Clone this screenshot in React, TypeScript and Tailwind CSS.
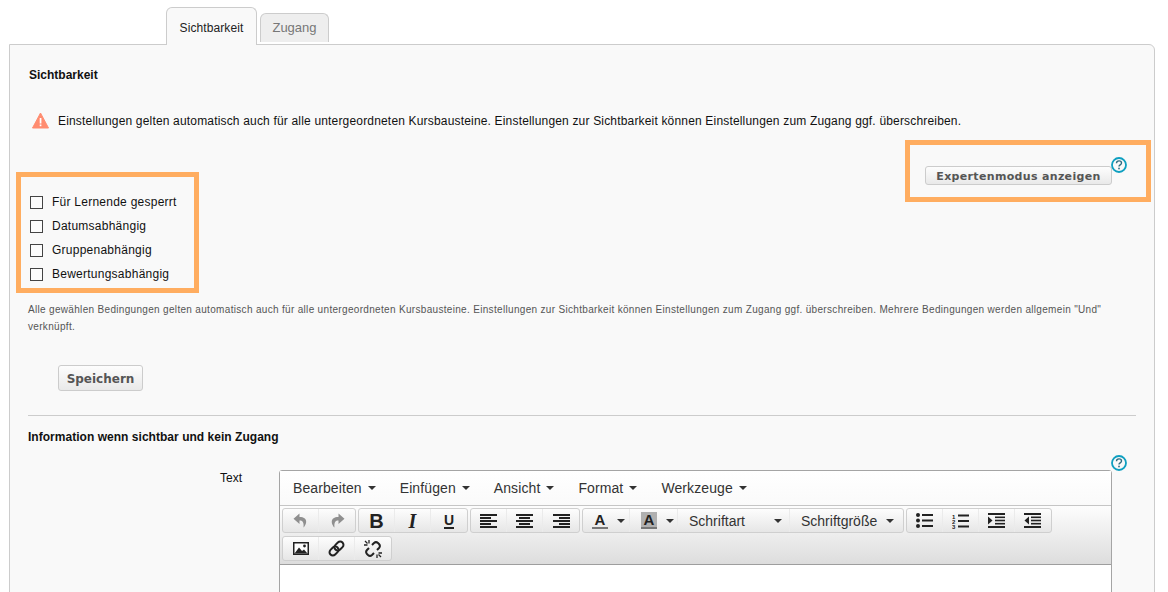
import type { ReactNode } from "react";

function Help() {
  return (
    <svg width="16" height="16" viewBox="0 0 16 16" className="block">
      <circle cx="8" cy="8" r="7" fill="none" stroke="#0e9fc0" strokeWidth="1.8" />
      <path d="M5.5 6.200c0-1.400 1.100-2.300 2.500-2.300s2.500.8 2.500 2.100c0 1.900-2.500 1.900-2.500 3.600" fill="none" stroke="#2f6d80" strokeWidth="1.400" />
      <rect x="7.200" y="10.700" width="1.600" height="1.600" fill="#2f6d80" />
    </svg>
  );
}

function Caret() {
  return <span className="inline-block w-0 h-0 border-x-[4px] border-x-transparent border-t-[4px] border-t-[#333]" />;
}

function Check({ label }: { label: string }) {
  return (
    <label className="flex items-center h-[24px] gap-[9px]">
      <span className="w-[13px] h-[13px] border border-[#444] bg-[#fcfcfc]" />
      <span className="text-[12px] tracking-[0.25px] text-[#111]">{label}</span>
    </label>
  );
}

function Lines({ rows }: { rows: [number, number][] }) {
  return (
    <svg width="18" height="14" viewBox="0 0 18 14">
      {rows.map(([x, w], i) => (
        <rect key={i} x={x} y={i * (12 / (rows.length - 1))} width={w} height="2" fill="#222" />
      ))}
    </svg>
  );
}

function Btn({ children, className = "w-[36px] justify-center" }: { children: ReactNode; className?: string }) {
  return (
    <div className={`${className} h-full flex items-center border-r border-[#ebebeb] last:border-r-0 text-[#333]`}>
      {children}
    </div>
  );
}

function Group({ children }: { children: ReactNode }) {
  return (
    <div className="flex h-[25px] border border-[#cfcfcf] rounded-[3px] bg-gradient-to-b from-[#fdfdfd] to-[#e6e6e6]">
      {children}
    </div>
  );
}

const menus = ["Bearbeiten", "Einfügen", "Ansicht", "Format", "Werkzeuge"];

export default function App() {
  return (
    <div className="w-[1168px] h-[592px] overflow-hidden bg-white font-['Liberation_Sans',sans-serif] text-[12px] text-[#111]">
      <div className="relative z-10 flex items-end pl-[166px] pt-[7px] -mb-px">
        <div className="w-[91px] h-[38px] flex justify-center pt-[11px] bg-[#f9f9f9] border border-b-0 border-[#ccc] rounded-t-[6px] text-[12px] tracking-[0.1px] text-[#222]">
          Sichtbarkeit
        </div>
        <div className="ml-[3px] mb-[3px] w-[69px] h-[29px] flex items-center justify-center bg-[#eee] border border-b-0 border-[#ccc] rounded-t-[6px] text-[13px] text-[#777]">
          Zugang
        </div>
      </div>

      <div className="ml-[9px] w-[1146px] h-[600px] bg-[#f9f9f9] border border-[#ccc] rounded-tr-[6px] px-[18px] pt-[21px]">
        <h3 className="ml-[1px] h-[18px] leading-[18px] font-bold text-[12px] text-[#111]">Sichtbarkeit</h3>

        <div className="mt-[26px] ml-[4px] h-[20px] flex items-center gap-[9px]">
          <svg width="17" height="17" viewBox="0 0 17 17">
            <path d="M8.500 1 16.500 16H0.500Z" fill="#ff8c70" stroke="#ff8c70" strokeLinejoin="round" />
            <rect x="7.700" y="6" width="1.700" height="5.500" fill="#fff" />
            <rect x="7.700" y="12.500" width="1.700" height="1.700" fill="#fff" />
          </svg>
          <p className="pt-[2px] text-[12px] tracking-[0.175px] whitespace-nowrap">
            Einstellungen gelten automatisch auch für alle untergeordneten Kursbausteine. Einstellungen zur Sichtbarkeit können Einstellungen zum Zugang ggf. überschreiben.
          </p>
        </div>

        <div className="mt-[10px] -mr-[15px] ml-auto w-[246px] h-[62px] border-[5px] border-[#ffad60] flex items-start pl-[15px] pt-[21px] relative">
          <button className="w-[187px] h-[19px] pt-[2px] rounded-[3px] border border-[#ccc] bg-gradient-to-b from-[#fdfdfd] to-[#e9e9e9] font-['DejaVu_Sans',sans-serif] font-bold text-[11px] tracking-[0.33px] text-[#555] whitespace-nowrap">
            Expertenmodus anzeigen
          </button>
          <span className="-ml-[1px] -mt-[9px]">
            <Help />
          </span>
        </div>

        <div className="-mt-[30px] -ml-[12px] w-[183px] h-[121px] border-[5px] border-[#ffad60] pl-[9px] pt-[13px]">
          <Check label="Für Lernende gesperrt" />
          <Check label="Datumsabhängig" />
          <Check label="Gruppenabhängig" />
          <Check label="Bewertungsabhängig" />
        </div>

        <p className="mt-[8px] text-[10px] leading-[17px] tracking-[0.32px] text-[#555] w-[1085px]">
          Alle gewählen Bedingungen gelten automatisch auch für alle untergeordneten Kursbausteine. Einstellungen zur Sichtbarkeit können Einstellungen zum Zugang ggf. überschreiben. Mehrere Bedingungen werden allgemein "Und" verknüpft.
        </p>

        <button className="block mt-[30px] ml-[30px] w-[85px] h-[26px] pt-[1px] rounded-[3px] border border-[#ccc] bg-gradient-to-b from-[#fdfdfd] to-[#e9e9e9] font-['DejaVu_Sans',sans-serif] font-bold text-[12px] text-[#555]">
          Speichern
        </button>

        <div className="mt-[24px] h-px bg-[#ccc]" />

        <h3 className="mt-[12px] h-[18px] leading-[18px] font-bold text-[12px] tracking-[0.03px] text-[#111]">
          Information wenn sichtbar und kein Zugang
        </h3>

        <div className="mt-[9px] flex justify-end pr-[9px] relative z-10">
          <Help />
        </div>

        <div className="-mt-px flex">
          <div className="ml-[192px] w-[59px] -mt-[1px] text-[12px] text-[#111]">Text</div>
          <div className="w-[833px] h-[200px] bg-white border border-[#a5a5a5] rounded-t-[3px]">
            <div className="h-[35px] flex items-center pl-[1px] bg-gradient-to-b from-white to-[#fafafa] border-b border-[#c5c5c5] text-[14px] tracking-[0.1px] text-[#333]">
              {menus.map((m) => (
                <div key={m} className="flex items-center gap-[6px] px-[12px]">
                  {m}
                  <Caret />
                </div>
              ))}
            </div>

            <div className="h-[59px] bg-gradient-to-b from-[#fdfdfd] to-[#dddddd] border-b border-[#9e9e9e] pl-[2px] pt-[2px]">
              <div className="flex gap-[2px]">
                <Group>
                  <Btn>
                    <svg width="16" height="15" viewBox="0 0 16 14">
                      <path d="M6.500 0 0.500 5.200l6 5.200V7c3 0 4.600 1.600 4 7 3.400-3.400 5-10.600-4-10.600Z" fill="#8f8f8f" />
                    </svg>
                  </Btn>
                  <Btn>
                    <svg width="16" height="15" viewBox="0 0 16 14">
                      <path d="M9.500 0l6 5.200-6 5.200V7c-3 0-4.600 1.600-4 7C2.100 10.600.5 3.400 9.500 3.400Z" fill="#8f8f8f" />
                    </svg>
                  </Btn>
                </Group>
                <Group>
                  <Btn>
                    <span className="font-bold text-[20px] leading-none text-[#222]">B</span>
                  </Btn>
                  <Btn>
                    <span className="font-['Liberation_Serif',serif] font-bold italic text-[20px] leading-none text-[#222]">I</span>
                  </Btn>
                  <Btn>
                    <span className="font-bold text-[14px] leading-[14px] border-b-2 border-[#222] text-[#222]">U</span>
                  </Btn>
                </Group>
                <Group>
                  <Btn>
                    <Lines rows={[[0, 17], [0, 11], [0, 17], [0, 11], [0, 17]]} />
                  </Btn>
                  <Btn>
                    <Lines rows={[[0, 17], [3, 11], [0, 17], [3, 11], [0, 17]]} />
                  </Btn>
                  <Btn>
                    <Lines rows={[[1, 17], [7, 11], [1, 17], [7, 11], [1, 17]]} />
                  </Btn>
                </Group>
                <Group>
                  <Btn className="w-[47px] gap-[9px] pl-[9px]">
                    <span className="flex flex-col items-center w-[16px]">
                      <span className="font-bold text-[15px] leading-[15px] text-[#222]">A</span>
                      <span className="w-[16px] h-[2px] bg-[#777]" />
                    </span>
                    <Caret />
                  </Btn>
                  <Btn className="w-[48px] gap-[9px] pl-[11px]">
                    <span className="flex flex-col items-center w-[16px] bg-[#b0b0b0]">
                      <span className="font-bold text-[15px] leading-[15px] text-[#222]">A</span>
                      <span className="w-[16px] h-[2px] bg-[#777]" />
                    </span>
                    <Caret />
                  </Btn>
                  <Btn className="w-[112px] justify-between pl-[11px] pr-[7px]">
                    <span className="pt-[2px] text-[14px]">Schriftart</span>
                    <Caret />
                  </Btn>
                  <Btn className="w-[113px] justify-between pl-[11px] pr-[9px]">
                    <span className="pt-[2px] text-[14px]">Schriftgröße</span>
                    <Caret />
                  </Btn>
                </Group>
                <Group>
                  <Btn>
                    <svg width="18" height="15" viewBox="0 0 18 15">
                      <circle cx="2" cy="2" r="2" fill="#222" />
                      <circle cx="2" cy="7.500" r="2" fill="#222" />
                      <circle cx="2" cy="13" r="2" fill="#222" />
                      <rect x="6" y="1" width="11" height="2" fill="#222" />
                      <rect x="6" y="6.500" width="11" height="2" fill="#222" />
                      <rect x="6" y="12" width="11" height="2" fill="#222" />
                    </svg>
                  </Btn>
                  <Btn>
                    <svg width="18" height="16" viewBox="0 0 18 16">
                      <text x="0" y="5.500" fontSize="6" fontWeight="700" fill="#222" fontFamily="Liberation Sans">1</text>
                      <text x="0" y="10.500" fontSize="6" fontWeight="700" fill="#222" fontFamily="Liberation Sans">2</text>
                      <text x="0" y="15.500" fontSize="6" fontWeight="700" fill="#222" fontFamily="Liberation Sans">3</text>
                      <rect x="6" y="1.500" width="11" height="2" fill="#222" />
                      <rect x="6" y="7" width="11" height="2" fill="#222" />
                      <rect x="6" y="12.500" width="11" height="2" fill="#222" />
                    </svg>
                  </Btn>
                  <Btn>
                    <svg width="18" height="15" viewBox="0 0 18 15">
                      <rect x="0" y="0" width="17" height="2" fill="#222" />
                      <rect x="0" y="13" width="17" height="2" fill="#222" />
                      <rect x="7" y="3.500" width="10" height="1.600" fill="#222" />
                      <rect x="7" y="6.700" width="10" height="1.600" fill="#222" />
                      <rect x="7" y="9.900" width="10" height="1.600" fill="#222" />
                      <path d="M0 3.500 4.500 7.500 0 11.500Z" fill="#222" />
                    </svg>
                  </Btn>
                  <Btn>
                    <svg width="18" height="15" viewBox="0 0 18 15">
                      <rect x="0" y="0" width="17" height="2" fill="#222" />
                      <rect x="0" y="13" width="17" height="2" fill="#222" />
                      <rect x="7" y="3.500" width="10" height="1.600" fill="#222" />
                      <rect x="7" y="6.700" width="10" height="1.600" fill="#222" />
                      <rect x="7" y="9.900" width="10" height="1.600" fill="#222" />
                      <path d="M5 3.500 0.500 7.500 5 11.500Z" fill="#222" />
                    </svg>
                  </Btn>
                </Group>
              </div>
              <div className="flex mt-[3px]">
                <Group>
                  <Btn>
                    <svg width="16" height="13" viewBox="0 0 16 13">
                      <rect x="0.750" y="0.750" width="14.500" height="11.500" fill="#fff" stroke="#222" strokeWidth="1.500" />
                      <path d="M1.500 11.500 6 5.500l3 3.500 2-1.500 3.500 4Z" fill="#222" />
                      <circle cx="11.500" cy="4" r="1.400" fill="#222" />
                    </svg>
                  </Btn>
                  <Btn>
                    <svg width="17" height="17" viewBox="0 0 17 17" fill="none" stroke="#222" strokeWidth="2">
                      <g transform="rotate(-45 8.500 8.500)">
                        <rect x="0" y="5.200" width="10" height="6.600" rx="3.300" />
                        <rect x="7" y="5.200" width="10" height="6.600" rx="3.300" />
                      </g>
                    </svg>
                  </Btn>
                  <Btn>
                    <svg width="18" height="18" viewBox="0 0 18 18" fill="none" stroke="#222" strokeWidth="2">
                      <path d="M8 5 10 3a3 3 0 0 1 4 0l1 1a3 3 0 0 1 0 4l-2 2" />
                      <path d="M10 13l-2 2a3 3 0 0 1-4 0l-1-1a3 3 0 0 1 0-4l2-2" />
                      <path d="M5 0v3.500M0 5h3.500M13 18v-3.500M18 13h-3.500M1 1l2.500 2.500M14.500 14.500 17 17" strokeWidth="1.300" />
                    </svg>
                  </Btn>
                </Group>
              </div>
            </div>
          </div>
        </div>
      </div>
    </div>
  );
}
